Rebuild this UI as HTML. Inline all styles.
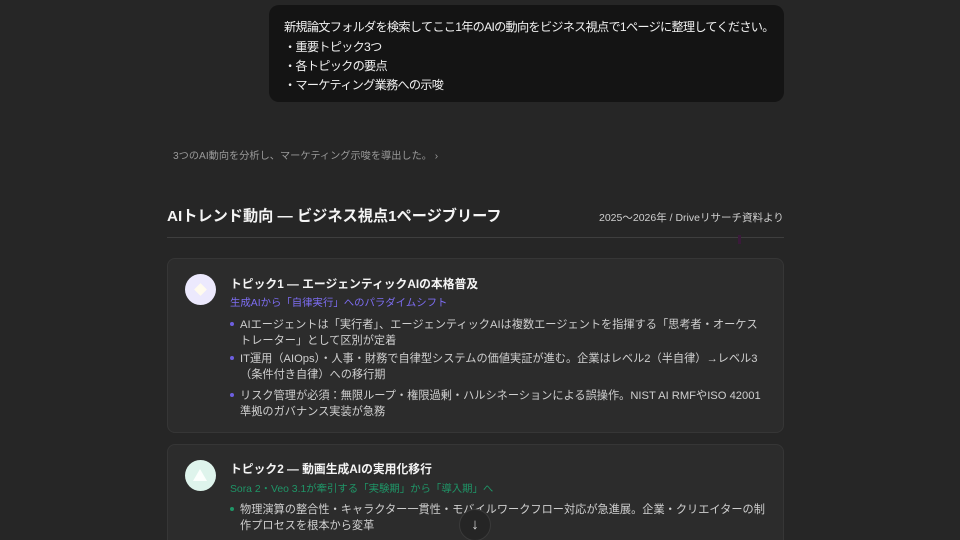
<!DOCTYPE html>
<html><head><meta charset="utf-8"><style>
*{margin:0;padding:0;box-sizing:border-box}
html,body{width:960px;height:540px;overflow:hidden}
body{background:#262626;font-family:"Liberation Sans","Noto Sans CJK JP",sans-serif;color:#e8e8e8;position:relative}
.a{position:absolute;white-space:nowrap}
.bubble{position:absolute;left:269px;top:5px;width:515px;height:97px;background:#141414;border-radius:10px}
.bubble div{position:absolute;left:15px;font-size:12.2px;letter-spacing:-0.75px;color:#f0f0f0;white-space:nowrap}
.card{position:absolute;left:167px;width:617px;background:#2c2c2c;border:1px solid #363636;border-radius:8px}
.ic{position:absolute;left:17px;width:31px;height:31px;border-radius:50%}
.t{position:absolute;left:62px;font-size:11.8px;font-weight:bold;color:#f4f4f4;white-space:nowrap}
.s{position:absolute;left:62px;font-size:10.4px;white-space:nowrap}
.b{position:absolute;left:72px;font-size:11.2px;color:#cfcfcf;white-space:nowrap;line-height:16px}
.d{position:absolute;left:62px;width:4px;height:4px;border-radius:50%}
</style></head><body>
<div class="bubble">
<div style="top:12px">新規論文フォルダを検索してここ1年のAIの動向をビジネス視点で1ページに整理してください。</div>
<div style="top:32px">・重要トピック3つ</div>
<div style="top:51px">・各トピックの要点</div>
<div style="top:70px">・マーケティング業務への示唆</div>
</div>
<div class="a" style="left:173px;top:147px;font-size:10.2px;color:#9a9a9a">3つのAI動向を分析し、マーケティング示唆を導出した。 ›</div>
<div class="a" style="left:167px;top:204px;font-size:15.2px;font-weight:bold;color:#f4f4f4">AIトレンド動向 — ビジネス視点1ページブリーフ</div>
<div class="a" style="left:599px;top:210px;font-size:10.5px;color:#cfcfcf">2025〜2026年 / Driveリサーチ資料より</div>
<div class="a" style="left:167px;top:237px;width:617px;height:1px;background:#3e3e3e"></div>
<div class="a" style="left:738px;top:235px;width:3px;height:9px;background:#3a1a3a"></div>

<div class="card" style="top:258px;height:175px">
<div class="ic" style="top:15px;background:#ece9fd"><div style="position:absolute;left:11px;top:11px;width:9px;height:9px;background:#fffbee;transform:rotate(45deg)"></div></div>
<div class="t" style="top:16px">トピック1 — エージェンティックAIの本格普及</div>
<div class="s" style="top:35px;color:#7d6df2">生成AIから「自律実行」へのパラダイムシフト</div>
<div class="d" style="top:63px;background:#6d5fe0"></div>
<div class="b" style="top:58px">AIエージェントは「実行者」、エージェンティックAIは複数エージェントを指揮する「思考者・オーケス<br>トレーター」として区別が定着</div>
<div class="d" style="top:97px;background:#6d5fe0"></div>
<div class="b" style="top:92px">IT運用（AIOps）・人事・財務で自律型システムの価値実証が進む。企業はレベル2（半自律）→レベル3<br>（条件付き自律）への移行期</div>
<div class="d" style="top:134px;background:#6d5fe0"></div>
<div class="b" style="top:129px">リスク管理が必須：無限ループ・権限過剰・ハルシネーションによる誤操作。NIST AI RMFやISO 42001<br>準拠のガバナンス実装が急務</div>
</div>

<div class="card" style="top:444px;height:120px">
<div class="ic" style="top:15px;background:#def4ec"><div style="position:absolute;left:8px;top:9px;width:0;height:0;border-left:7px solid transparent;border-right:7px solid transparent;border-bottom:12px solid #fbfffd"></div></div>
<div class="t" style="top:15px">トピック2 — 動画生成AIの実用化移行</div>
<div class="s" style="top:35px;color:#1f9567">Sora 2・Veo 3.1が牽引する「実験期」から「導入期」へ</div>
<div class="d" style="top:62px;background:#1f9567"></div>
<div class="b" style="top:57px">物理演算の整合性・キャラクター一貫性・モバイルワークフロー対応が急進展。企業・クリエイターの制<br>作プロセスを根本から変革</div>
</div>
<div class="a" style="left:459px;top:509px;width:32px;height:32px;border-radius:50%;background:#252525;border:1px solid #3a3a3a;color:#ddd;font-size:15px;text-align:center;line-height:29px">↓</div>
</body></html>
